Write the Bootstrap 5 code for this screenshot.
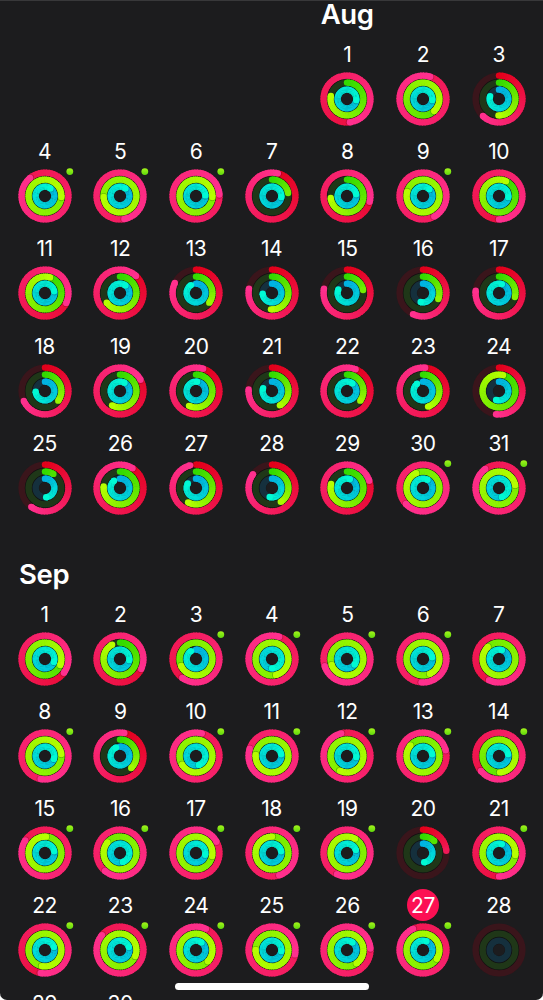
<!DOCTYPE html>
<html lang="en">
<head>
<meta charset="utf-8">
<meta name="viewport" content="width=device-width, initial-scale=1">
<title>Activity history</title>
<link href="https://cdn.jsdelivr.net/npm/bootstrap@5.3.0/dist/css/bootstrap.min.css" rel="stylesheet">
<style>
  body { background: #fff; font-family: Inter, "Liberation Sans", sans-serif; overflow: hidden; }
  .screen { background: #1c1c1e; height: 1000px; padding: 0 6.5px 0 6.7px; box-shadow: inset 0 1px 0 #38383a; border-radius: 0 0 7px 7px; }
  .month-title { font-size: 27.5px; font-weight: 600; line-height: 30px; letter-spacing: -.4px; padding-left: 12.4px; margin-bottom: 9px; }
  #aug .month-title { margin-top: -1px; padding-left: 11.2px; }
  #sep { margin-top: 44px; }
  .week { height: 97.2px; }
  #aug .week:last-child { height: 88px; }
  .day-num { width: 32px; height: 32px; line-height: 33.4px; font-size: 21px; letter-spacing: -.5px; margin-bottom: 2px; text-align: center; white-space: nowrap; }
  .day-num.today { background: #fc1053; }
  .rings { width: 54px; height: 54px; overflow: visible; }
  .home-bar { width: 194px; height: 7px; left: 174.5px; top: 982.5px; }
</style>
</head>
<body>

<main class="screen position-relative overflow-hidden text-white">
  <section id="aug">
    <div class="row g-0">
      <div class="col"></div><div class="col"></div><div class="col"></div><div class="col"></div>
      <div class="col"><h2 class="month-title">Aug</h2></div>
      <div class="col"></div><div class="col"></div>
    </div>
    <div class="weeks"></div>
  </section>

  <section id="sep">
    <h2 class="month-title mt-0">Sep</h2>
    <div class="weeks"></div>
  </section>

  <div class="home-bar position-absolute bg-white rounded-pill"></div>
</main>

<script src="https://cdn.jsdelivr.net/npm/bootstrap@5.3.0/dist/js/bootstrap.bundle.min.js"></script>
<script>
  // each day: move, exercise, stand (1 = goal reached), then 1 if there was a workout
  const aug = [
    [1.48, .78, 1.27], [2.05, 1.38, 1.27], [.62, .505, .8],
    [1.89, 2.26, 1.1, 1], [2.47, 2.74, 1.1, 1], [2.24, 2.26, 1.24, 1], [1.04, .22, 1.27], [1.29, .73, 1.22], [2.42, 2.79, 1.12, 1], [1.5, 1.07, 1.27],
    [1.32, 1.05, 1.22], [1.12, .65, 1.1], [.82, .35, .91], [.78, .51, .74], [.78, .22, .81], [.57, .31, .54], [.765, .29, 1.05],
    [.68, .35, .74], [1.17, .58, 1.08], [1.05, .57, 1.02], [.76, .42, .8], [1.06, .35, 1.1], [1.015, .45, .89], [.52, 1.04, .55],
    [.6, .085, .48], [1.09, .765, .89], [.96, .58, .83], [.85, .41, .54], [1.2, .79, 1.05], [2.63, 1.93, 1.08, 1], [1.9, 2.22, 1.45, 1]
  ];
  const sep = [
    [1.35, 1.31, 1.3], [1.32, .92, 1.27], [1.6, 1.68, .91, 1], [2.05, 2.46, 1.5, 1], [2.7, 2.69, 1.35, 1], [2.51, 2.43, 1.22, 1], [1.57, 1.88, 1.05],
    [2.53, 2.23, 1.3, 1], [1.03, .38, .93], [2.04, 2.66, 1.45, 1], [2.8, 2.76, 1.22, 1], [1.96, 2.57, 1.27, 1], [2.21, 1.86, 1.22, 1], [1.64, 1.49, 1.22, 1],
    [1.84, 2.01, 1.22, 1], [2.61, 1.86, 1.45, 1], [2.17, 2.28, 1.28, 1], [2.45, 2.0, 1.22, 1], [2.57, 2.08, 1.2, 1], [.235, .12, .48], [1.5, 2.27, 1.05, 1],
    [1.53, 2.53, 1.2, 1], [1.86, 2.31, 1.2, 1], [2.07, 2.37, 1.1, 1], [2.28, 2.75, 1.27, 1], [2.24, 2.4, 1.1, 1], [1.93, 2.34, 1.06, 1], [0, 0, 0],
    [0, 0, 0], [0, 0, 0]
  ];

  const ringStyles = [
    { r: 23.4, w: 6.4, from: [226, 0, 26], to: [255, 48, 142], track: '#3a151b' },
    { r: 16.4, w: 6.4, from: [50, 218, 0], to: [182, 255, 0], track: '#1f3718' },
    { r: 9.35, w: 6.4, from: [0, 178, 226], to: [0, 250, 212], track: '#15303d' }
  ];

  function mix(a, b, t) {
    return `rgb(${a.map((v, i) => Math.round(v + (b[i] - v) * t)).join(',')})`;
  }

  function point(r, turn) {
    const a = turn * Math.PI * 2;
    return [(r * Math.sin(a)).toFixed(2), (-r * Math.cos(a)).toFixed(2)];
  }

  function ring(s, value) {
    let out = `<circle r="${s.r}" fill="none" stroke="${s.track}" stroke-width="${s.w}"/>`;
    if (!value) return out;
    const start = Math.max(0, value - 1);
    const steps = Math.ceil((value - start) * 60);
    const size = (value - start) / steps;
    // short arcs don't get as far as the end colour
    const full = Math.max(value, .45);
    if (value < 1) {
      const [x, y] = point(s.r, 0);
      out += `<circle cx="${x}" cy="${y}" r="${s.w / 2}" fill="${mix(s.from, s.to, 0)}"/>`;
    }
    for (let i = 0; i < steps; i++) {
      const a = start + i * size;
      const p = point(s.r, a), q = point(s.r, a + size + (i < steps - 1 ? .006 : 0));
      out += `<path d="M${p} A${s.r} ${s.r} 0 0 1 ${q}" fill="none" stroke="${mix(s.from, s.to, (a + size / 2) / full)}" stroke-width="${s.w}"/>`;
    }
    // rounded head, with a soft shadow where it laps over the ring
    if (value >= .95) {
      const [sx, sy] = point(s.r, value + .16 / s.r);
      out += `<circle cx="${sx}" cy="${sy}" r="${s.w / 2 - .1}" fill="#000" fill-opacity=".22"/>`;
    }
    const [x, y] = point(s.r, value);
    return out + `<circle cx="${x}" cy="${y}" r="${s.w / 2}" fill="${mix(s.from, s.to, value / full)}"/>`;
  }

  function dayCell(n, d, today) {
    const dot = d[3] ? '<circle cx="24.8" cy="-24.4" r="3.4" fill="url(#dotFill)"/>' : '';
    return `<div class="col d-flex flex-column align-items-center">
      <div class="day-num${today ? ' today rounded-circle' : ''}">${n}</div>
      <svg class="rings" viewBox="-27 -27 54 54">
        <circle r="26" fill="#120f12"/><circle r="6" fill="#1c1c1e"/>
        ${ringStyles.map((s, i) => ring(s, d[i])).join('')}${dot}
      </svg>
    </div>`;
  }

  function buildMonth(id, days, offset, today) {
    const cells = Array(offset).fill('<div class="col"></div>')
      .concat(days.map((d, i) => dayCell(i + 1, d, i + 1 === today)));
    while (cells.length % 7) cells.push('<div class="col"></div>');
    let html = '';
    for (let i = 0; i < cells.length; i += 7) {
      html += `<div class="row g-0 week">${cells.slice(i, i + 7).join('')}</div>`;
    }
    document.querySelector(`#${id} .weeks`).innerHTML = html;
  }

  buildMonth('aug', aug, 4);
  buildMonth('sep', sep, 0, 27);
</script>

<svg width="0" height="0" class="position-absolute">
  <defs>
    <linearGradient id="dotFill" x1="0" y1="0" x2="0" y2="1">
      <stop offset="0" stop-color="#a4f51b"/>
      <stop offset="1" stop-color="#5fd80c"/>
    </linearGradient>
  </defs>
</svg>
</body>
</html>
